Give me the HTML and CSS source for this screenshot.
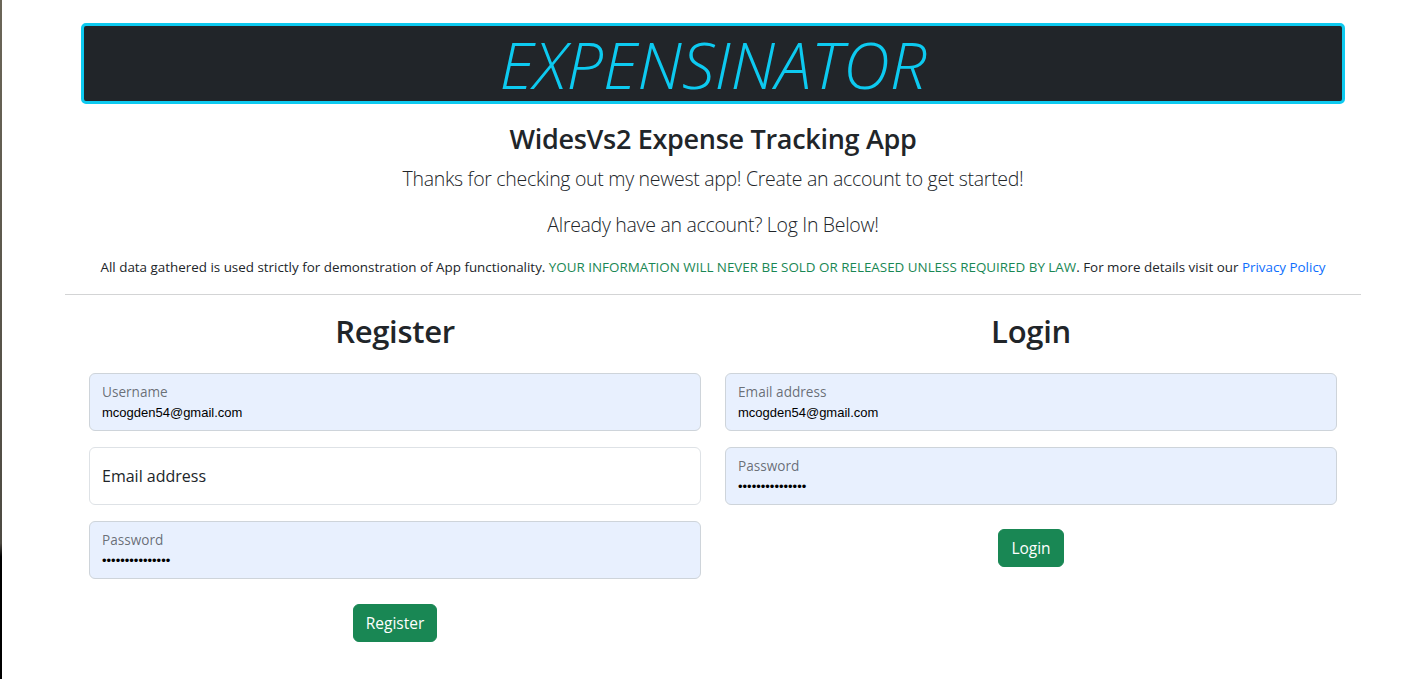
FILE: index.html
```html
<!DOCTYPE html>
<html lang="en">
<head>
<meta charset="utf-8">
<title>Expensinator</title>
<link rel="stylesheet" href="styles.css">
</head>
<body>
<div class="edge"></div>
<div class="container">
  <header class="brand"><h1 class="brand-title">EXPENSINATOR</h1></header>
  <div class="intro">
    <h3 class="app-title">WidesVs2 Expense Tracking App</h3>
    <p class="lead">Thanks for checking out my newest app! Create an account to get started!</p>
    <p class="lead">Already have an account? Log In Below!</p>
    <p class="note">All data gathered is used strictly for demonstration of App functionality. <span class="success">YOUR INFORMATION WILL NEVER BE SOLD OR RELEASED UNLESS REQUIRED BY LAW</span>. For more details visit our <a href="#" class="link">Privacy Policy</a></p>
  </div>
  <hr class="divider">
  <div class="row">
    <section class="col">
      <h2 class="form-title">Register</h2>
      <form class="form">
        <div class="floating">
          <input class="field filled autofill" type="text" id="ru" value="mcogden54@gmail.com">
          <label class="float-label up" for="ru">Username</label>
        </div>
        <div class="floating">
          <input class="field" type="email" id="re">
          <label class="float-label" for="re">Email address</label>
        </div>
        <div class="floating">
          <input class="field filled autofill pw" type="password" id="rp" value="aaaaaaaaaaaaaaa">
          <label class="float-label up" for="rp">Password</label>
        </div>
        <div class="actions reg"><button type="button" class="btn">Register</button></div>
      </form>
    </section>
    <section class="col">
      <h2 class="form-title">Login</h2>
      <form class="form">
        <div class="floating">
          <input class="field filled autofill" type="email" id="le" value="mcogden54@gmail.com">
          <label class="float-label up" for="le">Email address</label>
        </div>
        <div class="floating">
          <input class="field filled autofill pw" type="password" id="lp" value="aaaaaaaaaaaaaaa">
          <label class="float-label up" for="lp">Password</label>
        </div>
        <div class="actions"><button type="button" class="btn">Login</button></div>
      </form>
    </section>
  </div>
</div>
</body>
</html>
```
FILE: styles.css
```css
* { box-sizing: border-box; }
html, body { margin: 0; padding: 0; }
body {
  font-family: "Open Sans", "Noto Sans", sans-serif;
  color: #212529;
  background: #fff;
  font-size: 16px;
  line-height: 1.5;
}
.edge {
  position: fixed;
  left: 0; top: 0; bottom: 0;
  width: 2px;
  background: linear-gradient(#6b6658, #4d4a42 80%, #000 82%);
}
.container {
  width: 1296px;
  margin: 0 0 0 65px;
  padding-top: 23px;
}
.brand {
  margin: 0 16px;
  height: 81px;
  background: #212529;
  border: 3px solid #0dcaf0;
  border-radius: 5px;
  display: flex;
  align-items: center;
  justify-content: center;
}
.brand-title {
  margin: 0;
  font-size: 65px;
  font-weight: 300;
  font-style: italic;
  color: #0dcaf0;
  line-height: 1;
  letter-spacing: 0;
  padding-top: 2px;
}
.intro { text-align: center; padding-top: 18px; }
.app-title {
  margin: 0 0 8px;
  font-size: 27px;
  letter-spacing: -0.3px;
  font-weight: 600;
  line-height: 1.25;
}
.lead {
  margin: 0 0 16px;
  font-size: 19.5px;
  letter-spacing: -0.3px;
  font-weight: 300;
  line-height: 30px;
}
.note {
  margin: 0;
  font-size: 13.4px;
  line-height: 21px;
  padding-top: 1px;
}
.success { color: #198754; }
.link { color: #0d6efd; text-decoration: none; }
.divider {
  margin: 16px 0 0;
  border: 0;
  border-top: 1px solid #d3d4d5;
}
.row {
  display: grid;
  grid-template-columns: 1fr 1fr;
  padding: 0 12px;
}
.col { padding: 0 12px; }
.form-title {
  margin: 18px 0 23px;
  text-align: center;
  font-size: 31px;
  letter-spacing: -0.3px;
  font-weight: 600;
  line-height: 1.2;
}
.form { display: flex; flex-direction: column; gap: 16px; }
.floating { position: relative; }
.field {
  display: block;
  width: 100%;
  height: 58px;
  border: 1px solid #dee2e6;
  border-radius: 6px;
  background: #fff;
  padding: 16px 12px;
  font-family: "Open Sans", sans-serif;
  font-size: 16px;
  color: #212529;
  outline: none;
}
.field.filled { padding: 29px 12px 7px; }
.field.autofill {
  background: #e8f0fe;
  border-color: #ced4da;
  font-family: "Liberation Sans", Arial, sans-serif;
  font-size: 13px;
  color: #000;
}
.field.pw { font-size: 13px; letter-spacing: 0; }
.float-label {
  position: absolute;
  left: 13px;
  top: 0;
  height: 58px;
  display: flex;
  align-items: center;
  font-size: 16px;
  color: #212529;
  pointer-events: none;
}
.float-label.up {
  height: auto;
  top: 9px;
  font-size: 13.6px;
  color: rgba(33, 37, 41, 0.65);
}
.actions { display: flex; justify-content: center; padding-top: 8px; }
.actions.reg { padding-top: 9px; }
.btn {
  background: #198754;
  color: #fff;
  border: 1px solid #198754;
  border-radius: 6px;
  font-family: "Open Sans", sans-serif;
  font-size: 15.5px;
  line-height: 24px;
  padding: 6px 12px;
  cursor: pointer;
}
```
